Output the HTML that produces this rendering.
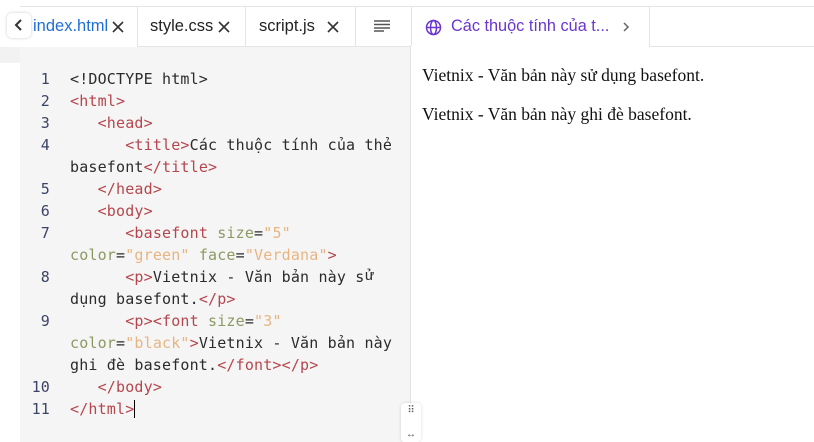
<!DOCTYPE html>
<html><head><meta charset="utf-8"><style>
*{margin:0;padding:0;box-sizing:border-box}
body{width:814px;height:442px;overflow:hidden;background:#fff;font-family:"Liberation Sans","DejaVu Sans",sans-serif;position:relative}
.topline{position:absolute;left:20px;top:6px;width:794px;height:1px;background:#e4e4e4}
.tab{position:absolute;top:7px;height:39px;font-size:16.5px;color:#222;line-height:38px}
.x{position:absolute;top:21px}
.sep{position:absolute;top:7px;width:1px;height:39px;background:#e4e4e4}
.bline{position:absolute;top:46px;height:1px;background:#e4e4e4}
.editor{position:absolute;left:20px;top:47px;width:391px;height:395px;background:#f5f5f5;border-right:1px solid #e2e2e2}
.code{position:absolute;left:0;top:68px;font-family:"DejaVu Sans Mono","Liberation Mono",monospace;font-size:15px;letter-spacing:0.17px;line-height:22px;color:#2b2b2b;white-space:pre}
.ln{position:absolute;width:50px;text-align:right;color:#3c4466}
.t{color:#b5464d}.a{color:#8c9a62}.v{color:#e8b582}
.prev{position:absolute;left:422px;font-family:"Liberation Serif",serif;font-size:17.5px;color:#111}
</style></head><body>
<div class="topline"></div>
<div style="position:absolute;left:0;top:47px;width:20px;height:16px;background:#f2f2f2"></div>
<div style="position:absolute;left:7px;top:13px;width:24px;height:25px;background:#fff;border-radius:5px;box-shadow:0 0 3px rgba(0,0,0,.2)"></div>
<svg style="position:absolute;left:12px;top:18px" width="14" height="14"><path d="M9 2L4 7l5 5" stroke="#333" stroke-width="2" fill="none"/></svg>
<div class="tab" style="left:33px;color:#1f6fd6">index.html</div>
<svg class="x" style="left:112px" width="12" height="12"><path d="M1 1l10 10M11 1L1 11" stroke="#333" stroke-width="1.6"/></svg>
<div class="sep" style="left:137px"></div>
<div class="tab" style="left:150px">style.css</div>
<svg class="x" style="left:218px" width="12" height="12"><path d="M1 1l10 10M11 1L1 11" stroke="#333" stroke-width="1.6"/></svg>
<div class="sep" style="left:245px"></div>
<div class="tab" style="left:259px">script.js</div>
<svg class="x" style="left:327px" width="12" height="12"><path d="M1 1l10 10M11 1L1 11" stroke="#333" stroke-width="1.6"/></svg>
<div class="sep" style="left:355px"></div>
<svg style="position:absolute;left:374px;top:20px" width="16" height="12"><path d="M0 1h16M0 4.5h16M0 8h16M0 11h10" stroke="#555" stroke-width="1.5"/></svg>
<div class="sep" style="left:411px"></div>
<div class="bline" style="left:137px;width:274px"></div>
<div class="sep" style="left:649px"></div>
<div class="bline" style="left:649px;width:165px"></div>
<svg style="position:absolute;left:425px;top:19px" width="17" height="17" viewBox="0 0 17 17"><g stroke="#6a35d0" stroke-width="1.5" fill="none"><circle cx="8.5" cy="8.5" r="7"/><ellipse cx="8.5" cy="8.5" rx="3" ry="7"/><path d="M1.5 8.5h14"/></g></svg>
<div class="tab" style="left:451px;color:#6a35d0;font-size:16.3px">Các thuộc tính của t...</div>
<svg style="position:absolute;left:622px;top:21px" width="8" height="12"><path d="M2 2l4 4-4 4" stroke="#666" stroke-width="1.5" fill="none"/></svg>
<div class="editor"></div>
<div class="code">
<div class="ln" style="top:0">1</div><div class="ln" style="top:22px">2</div><div class="ln" style="top:44px">3</div><div class="ln" style="top:66px">4</div><div class="ln" style="top:110px">5</div><div class="ln" style="top:132px">6</div><div class="ln" style="top:154px">7</div><div class="ln" style="top:198px">8</div><div class="ln" style="top:242px">9</div><div class="ln" style="top:308px">10</div><div class="ln" style="top:330px">11</div>
<div style="position:absolute;left:70px;top:0">&lt;!DOCTYPE html&gt;
<span class="t">&lt;html&gt;</span>
   <span class="t">&lt;head&gt;</span>
      <span class="t">&lt;title&gt;</span>Các thuộc tính của thẻ
basefont<span class="t">&lt;/title&gt;</span>
   <span class="t">&lt;/head&gt;</span>
   <span class="t">&lt;body&gt;</span>
      <span class="t">&lt;basefont</span> <span class="a">size</span>=<span class="v">"5"</span>
<span class="a">color</span>=<span class="v">"green"</span> <span class="a">face</span>=<span class="v">"Verdana"</span><span class="t">&gt;</span>
      <span class="t">&lt;p&gt;</span>Vietnix - Văn bản này s<span style="font-family:'Liberation Mono',monospace;display:inline-block;height:22px;line-height:22px;vertical-align:top">ử</span>
dụng basefont.<span class="t">&lt;/p&gt;</span>
      <span class="t">&lt;p&gt;&lt;font</span> <span class="a">size</span>=<span class="v">"3"</span>
<span class="a">color</span>=<span class="v">"black"</span><span class="t">&gt;</span>Vietnix - Văn bản này
ghi đè basefont.<span class="t">&lt;/font&gt;&lt;/p&gt;</span>
   <span class="t">&lt;/body&gt;</span>
<span class="t">&lt;/html&gt;</span><span style="border-left:1px solid #000"></span></div>
</div>
<div style="position:absolute;left:401px;top:403px;width:20px;height:39px;background:#fff;border-radius:4px;box-shadow:0 0 3px rgba(0,0,0,.15);font-size:10px;color:#555;text-align:center;line-height:12px;padding-top:2px">⠿<br><br>↔</div>
<div class="prev" style="top:65px">Vietnix - Văn bản này sử dụng basefont.</div>
<div class="prev" style="top:104px">Vietnix - Văn bản này ghi đè basefont.</div>
</body></html>
